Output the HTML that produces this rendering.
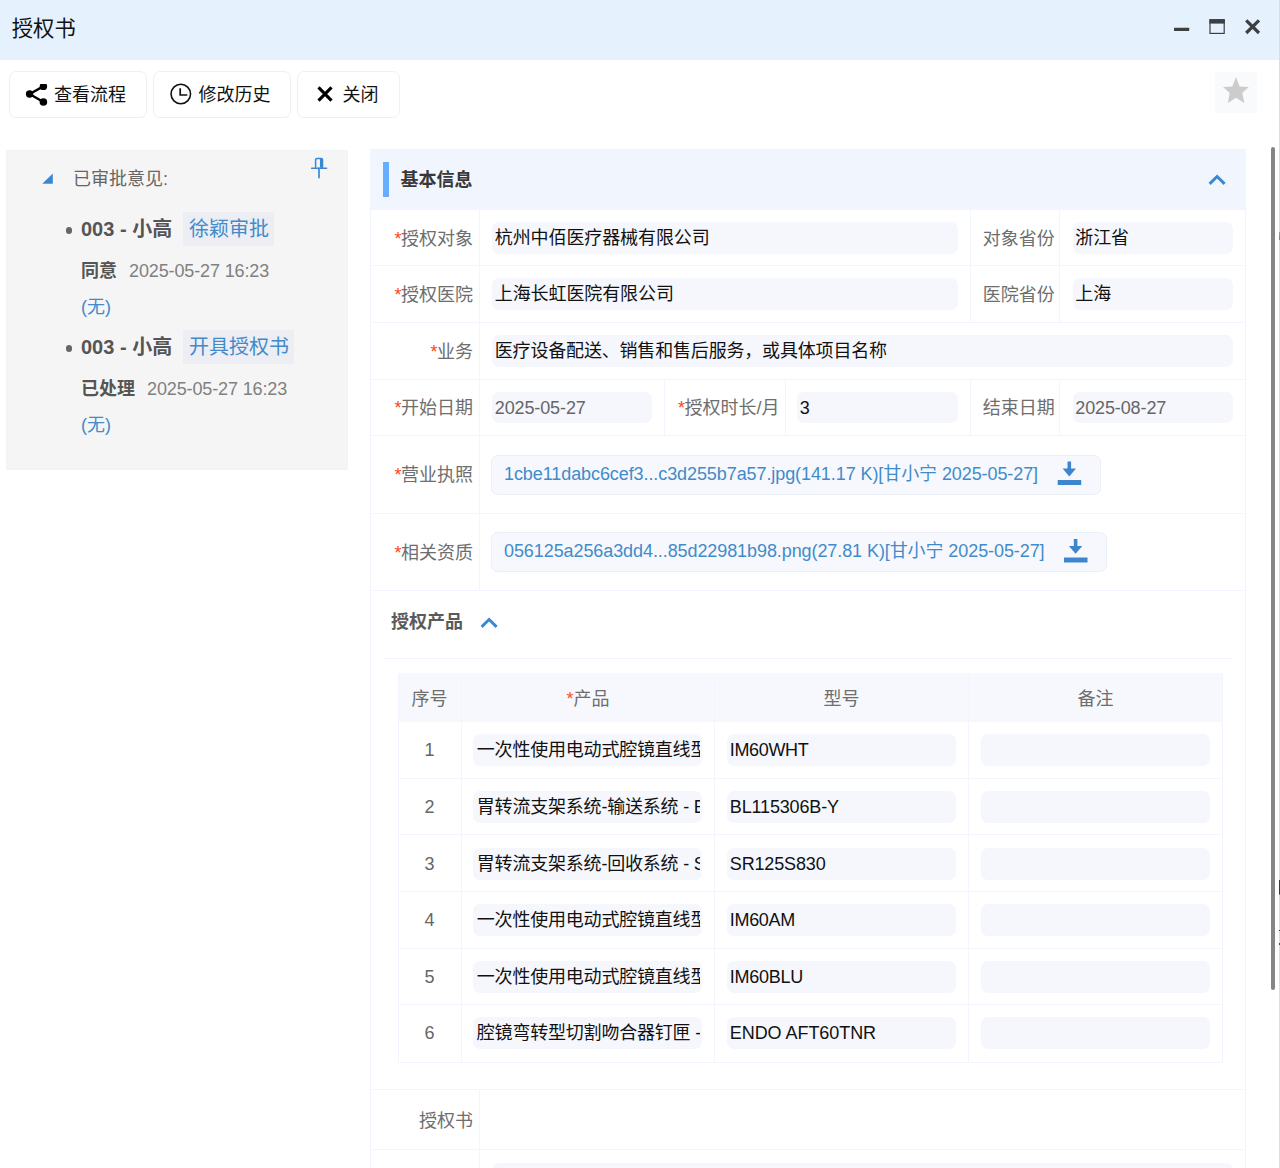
<!DOCTYPE html>
<html lang="zh-CN">
<head>
<meta charset="utf-8">
<title>授权书</title>
<style>
*{box-sizing:border-box;margin:0;padding:0}
html,body{width:1280px;height:1168px;overflow:hidden;background:#fff}
body{position:relative;font-family:"Liberation Sans","Noto Sans CJK SC",sans-serif;font-size:18px;color:#111;line-height:1}
.abs{position:absolute}
svg{display:block}
/* title bar */
#title{left:0;top:0;width:1279px;height:59.5px;background:#e5f2fe}
#title .t{left:11.8px;top:14.3px;font-size:21.3px;line-height:30px;color:#111;white-space:nowrap}
#edge{left:1279px;top:0;width:1px;height:1168px;background:#dcdde0}
/* toolbar */
.btn{top:71px;height:46.5px;border:1px solid #f0f0f0;border-radius:7px;background:#fff;white-space:nowrap}
.btn .lbl{position:absolute;top:8.6px;line-height:28px;font-size:18px;color:#111}
#star{left:1215px;top:71.5px;width:42px;height:41px;background:#f9fafc}
/* left panel */
#left{left:6px;top:149.5px;width:342px;height:320px;background:#f5f5f5;box-shadow:inset 0 0 0 1px #f0f3f8}
#left .h{left:67px;top:15px;line-height:28px;font-size:18px;color:#666;white-space:nowrap}
#left .it{left:75px;line-height:30px;font-size:20px;font-weight:bold;color:#555;white-space:nowrap}
#left .dot{left:59.5px;width:6.5px;height:6.5px;border-radius:50%;background:#666}
#left .tag{left:177.4px;height:34px;background:#eceef4;color:#428bca;font-size:20px;line-height:34px;padding:0 4.8px 0 5.6px;white-space:nowrap}
#left .st{left:75px;line-height:28px;font-size:18px;color:#555;font-weight:bold;white-space:nowrap}
#left .st span{font-weight:normal;color:#808080;margin-left:12px;letter-spacing:-0.13px}
#left .no{left:75px;line-height:28px;font-size:18px;color:#428bca;white-space:nowrap}
/* right panel */
#right{left:370px;top:149.5px;width:875.5px;height:1030px}
#right .hd{left:0;top:-0.6px;width:100%;height:60.4px;background:#f1f5fe}
#right .hd .bar{left:12.5px;top:13.1px;width:6px;height:35px;background:#66adff}
#right .hd .tx{left:30.5px;top:16.6px;line-height:28px;font-size:18px;font-weight:bold;color:#383838;white-space:nowrap}
.row{left:0;width:100%;border-top:1px solid #f2f5fd}
.lab{position:absolute;top:0;height:100%;border-right:1px solid #f2f5fd;color:#6e6e6e;font-size:18px;text-align:right;padding-right:5.5px;padding-top:2px;white-space:nowrap;display:flex;align-items:center;justify-content:flex-end}
.lab i{font-style:normal;color:#ff4410;letter-spacing:-0.5px}
.inp{position:absolute;height:31.5px;border-radius:7px;background:#f5f7fd;font-size:18px;line-height:32.5px;padding-left:2.8px;border-right:2px solid #f5f7fd;color:#111;letter-spacing:-0.1px;white-space:nowrap;overflow:hidden}
.inp.g{color:#666;letter-spacing:-0.12px}

.vb{position:absolute;top:0;height:100%;width:1px;background:#f2f5fd}
.att{position:absolute;height:40px;border:1px solid #ebeff6;border-radius:7px;background:#f6f8fd;color:#428bca;font-size:18px;line-height:37px;padding-left:12.5px;white-space:nowrap;letter-spacing:-0.085px}
/* table */
#tb{left:27px;top:523px;width:826px;height:390px}
#tb .th{position:absolute;top:0;height:49px;background:#f6f8fd;color:#6e6e6e;font-size:18px;line-height:52px;text-align:center}
#tb .th i{font-style:normal;color:#f4511e}
#tb .hl{position:absolute;left:0;width:825px;height:1px;background:#f2f5fd}
#tb .vl{position:absolute;top:0;width:1px;height:390px;background:#f2f5fd}
#tb .n{position:absolute;left:0;width:64px;text-align:center;color:#666;font-size:18px;line-height:32px}
#scroll{left:1271.3px;top:147.3px;width:3.9px;height:842.7px;border-radius:2px;background:#858585}
</style>
</head>
<body>
<div id="title" class="abs"><div class="t abs">授权书</div>
<svg class="abs" style="left:1170px;top:14px" width="100" height="26" viewBox="0 0 100 26">
<rect x="4" y="13.7" width="15.2" height="3.4" rx="0.6" fill="#3c4043"/>
<rect x="40" y="5.8" width="14.2" height="13.6" fill="none" stroke="#3c4043" stroke-width="1.2"/>
<rect x="39.4" y="5.2" width="15.4" height="4.4" fill="#3c4043"/>
<path d="M76.2 6.3 L89 19 M89 6.3 L76.2 19" stroke="#3c4043" stroke-width="3.2" fill="none"/>
</svg>
</div>
<div id="edge" class="abs"></div>
<div class="abs" style="left:1279px;top:232px;width:1px;height:4px;background:#c08a5a"></div>
<div class="abs" style="left:1279px;top:236px;width:1px;height:4px;background:#5a88d0"></div>
<div class="abs" style="left:1279px;top:880px;width:1px;height:14px;background:#35375e"></div>
<div class="abs" style="left:1279px;top:894px;width:1px;height:1px;background:#4a86e0"></div>
<div class="abs" style="left:1279px;top:930px;width:1px;height:1px;background:#333"></div>
<div class="abs" style="left:1279px;top:943px;width:1px;height:2px;background:#444"></div>

<div class="btn abs" style="left:8.6px;width:138.5px">
<svg class="abs" style="left:15px;top:12px" width="24" height="24" viewBox="0 0 24 24">
<path d="M4.6 10 L18.4 2.4 M4.6 10 L18.4 18" stroke="#000" stroke-width="2.4" fill="none"/>
<circle cx="4.6" cy="10" r="3.7" fill="#000"/><circle cx="18.4" cy="2.4" r="3.7" fill="#000"/><circle cx="18.4" cy="18" r="3.8" fill="#000"/>
</svg>
<span class="lbl" style="left:44.5px">查看流程</span></div>
<div class="btn abs" style="left:152.6px;width:138.5px">
<svg class="abs" style="left:16.3px;top:10.8px" width="22" height="22" viewBox="0 0 22 22">
<circle cx="10.8" cy="11" r="9.75" fill="none" stroke="#111" stroke-width="1.6"/>
<path d="M10.2 5.3 V12 H17.3" fill="none" stroke="#111" stroke-width="1.7"/>
</svg>
<span class="lbl" style="left:45px">修改历史</span></div>
<div class="btn abs" style="left:296.6px;width:103.4px">
<svg class="abs" style="left:18.6px;top:13.2px" width="18" height="18" viewBox="0 0 18 18">
<path d="M2.5 2.4 L15.5 15.6 M15.5 2.4 L2.5 15.6" stroke="#000" stroke-width="3.1" fill="none"/>
</svg>
<span class="lbl" style="left:45px">关闭</span></div>
<div id="star" class="abs">
<svg class="abs" style="left:0;top:0" width="42" height="41" viewBox="0 0 42 41">
<path d="M21 5.5 L24.6 15.2 L33.8 15.7 L27.2 21.5 L29.4 31.5 L21 26.3 L12.9 31.5 L14.7 21.5 L8 15.7 L17.3 15.2 Z" fill="#cccccc" transform="translate(0,-0.6)"/>
</svg></div>

<div id="left" class="abs">
<svg class="abs" style="left:36px;top:23px" width="12" height="12" viewBox="0 0 12 12"><path d="M10.8 0.5 V10.8 H0.3 Z" fill="#3a88d2"/></svg>
<div class="h abs">已审批意见:</div>
<svg class="abs" style="left:304px;top:7px" width="18" height="22" viewBox="0 0 18 22">
<path d="M5.6 10.8 V2.7 Q5.6 1.4 6.9 1.4 H11.2 Q12.5 1.4 12.5 2.7 V10.8" fill="none" stroke="#3a88d2" stroke-width="1.5"/>
<path d="M11.3 1.6 V10.8" stroke="#3a88d2" stroke-width="2.7"/>
<path d="M1.6 11.3 H16.6" stroke="#3a88d2" stroke-width="1.5" stroke-linecap="round"/>
<path d="M9 11.3 V20.6" stroke="#3a88d2" stroke-width="1.7" stroke-linecap="round"/>
</svg>
<div class="dot abs" style="top:77.5px"></div>
<div class="it abs" style="top:64px">003 - 小高</div>
<div class="tag abs" style="top:62.5px">徐颖审批</div>
<div class="st abs" style="top:107px">同意<span>2025-05-27 16:23</span></div>
<div class="no abs" style="top:143px">(无)</div>
<div class="dot abs" style="top:195.5px"></div>
<div class="it abs" style="top:182px">003 - 小高</div>
<div class="tag abs" style="top:180.5px">开具授权书</div>
<div class="st abs" style="top:225px">已处理<span>2025-05-27 16:23</span></div>
<div class="no abs" style="top:261px">(无)</div>
</div>

<div id="right" class="abs">
<div class="hd abs"><div class="bar abs"></div><div class="tx abs">基本信息</div>
<svg class="abs" style="left:836px;top:22.8px" width="22" height="16" viewBox="0 0 22 16"><path d="M3.6 11.9 L11.1 4.5 L18.6 11.9" fill="none" stroke="#3a88d2" stroke-width="2.9"/></svg>
</div>
<div class="vb" style="left:0"></div><div class="vb" style="left:874.5px"></div>
<!-- rows -->
<div class="row abs" style="top:59.5px;height:56px">
 <div class="lab" style="left:0;width:109.5px"><i>*</i>授权对象</div>
 <div class="inp" style="left:122px;top:12px;width:466px">杭州中佰医疗器械有限公司</div>
 <div class="vb" style="left:599.5px"></div>
 <div class="lab" style="left:600.5px;width:89px;padding-right:3.8px">对象省份</div>
 <div class="inp" style="left:702.5px;top:12px;width:160.5px">浙江省</div>
</div>
<div class="row abs" style="top:115.5px;height:57px">
 <div class="lab" style="left:0;width:109.5px"><i>*</i>授权医院</div>
 <div class="inp" style="left:122px;top:12px;width:466px">上海长虹医院有限公司</div>
 <div class="vb" style="left:599.5px"></div>
 <div class="lab" style="left:600.5px;width:89px;padding-right:3.8px">医院省份</div>
 <div class="inp" style="left:702.5px;top:12px;width:160.5px">上海</div>
</div>
<div class="row abs" style="top:172.5px;height:56.5px">
 <div class="lab" style="left:0;width:109.5px"><i>*</i>业务</div>
 <div class="inp" style="left:122px;top:12px;width:741px;letter-spacing:-0.18px">医疗设备配送、销售和售后服务，或具体项目名称</div>
</div>
<div class="row abs" style="top:229px;height:56.5px">
 <div class="lab" style="left:0;width:109.5px"><i>*</i>开始日期</div>
 <div class="inp g" style="left:122px;top:12px;width:160px">2025-05-27</div>
 <div class="vb" style="left:293.5px"></div>
 <div class="lab" style="left:294.5px;width:121px;padding-right:5px"><i>*</i>授权时长/月</div>
 <div class="inp" style="left:427px;top:12px;width:160.5px">3</div>
 <div class="vb" style="left:599.5px"></div>
 <div class="lab" style="left:600.5px;width:89px;padding-right:3.8px">结束日期</div>
 <div class="inp g" style="left:702.5px;top:12px;width:160.5px">2025-08-27</div>
</div>
<div class="row abs" style="top:285.5px;height:77.5px">
 <div class="lab" style="left:0;width:109.5px"><i>*</i>营业执照</div>
 <div class="att" style="left:120.5px;top:18.5px;width:610px">1cbe11dabc6cef3...c3d255b7a57.jpg(141.17 K)[甘小宁 2025-05-27]
 <svg class="abs" style="left:564px;top:3px" width="28" height="28" viewBox="0 0 28 28"><path transform="translate(-0.6,-0.4)" d="M2.3 21.5 H25.8 V26.5 H2.3 Z M12.1 3 H15.7 V10 H20.6 L13.9 17.8 L7.2 10 H12.1 Z" fill="#3c86cd"/></svg></div>
</div>
<div class="row abs" style="top:363px;height:77.5px">
 <div class="lab" style="left:0;width:109.5px"><i>*</i>相关资质</div>
 <div class="att" style="left:120.5px;top:18.5px;width:616px">056125a256a3dd4...85d22981b98.png(27.81 K)[甘小宁 2025-05-27]
 <svg class="abs" style="left:570px;top:3px" width="28" height="28" viewBox="0 0 28 28"><path transform="translate(-0.3,0)" d="M2.3 21.5 H25.8 V26.5 H2.3 Z M12.1 3 H15.7 V10 H20.6 L13.9 17.8 L7.2 10 H12.1 Z" fill="#3d85cc"/></svg></div>
</div>
<div class="row abs" style="top:440.5px;height:498.5px">
 <div class="abs" style="left:21px;top:17px;line-height:28px;font-size:18px;font-weight:bold;color:#5a5a5a;white-space:nowrap">授权产品</div>
 <svg class="abs" style="left:108px;top:23.5px" width="22" height="16" viewBox="0 0 22 16"><path d="M3.6 11.9 L11.1 4.5 L18.6 11.9" fill="none" stroke="#3a88d2" stroke-width="2.9"/></svg>
 <div class="abs" style="left:12.5px;top:67px;width:850px;height:1px;background:#f2f5fd"></div>
 <div id="tb" class="abs" style="left:27.5px;top:82px">
<div class="th" style="left:0;width:64px">序号</div>
<div class="th" style="left:64px;width:253px"><i>*</i>产品</div>
<div class="th" style="left:317px;width:254px">型号</div>
<div class="th" style="left:571px;width:254px">备注</div>
<div class="hl" style="top:105px"></div>
<div class="n" style="top:61px">1</div>
<div class="inp" style="left:75.5px;top:61px;width:229px;padding-left:3.8px;letter-spacing:-0.2px">一次性使用电动式腔镜直线型切割吻合器</div>
<div class="inp" style="left:329.5px;top:61px;width:229px;letter-spacing:-0.34px">IM60WHT</div>
<div class="inp" style="left:583.5px;top:61px;width:229px"></div>
<div class="hl" style="top:161px"></div>
<div class="n" style="top:118px">2</div>
<div class="inp" style="left:75.5px;top:118px;width:229px;padding-left:3.8px;letter-spacing:-0.2px">胃转流支架系统-输送系统 - BL115306B-Y</div>
<div class="inp" style="left:329.5px;top:118px;width:229px;letter-spacing:-0.15px">BL115306B-Y</div>
<div class="inp" style="left:583.5px;top:118px;width:229px"></div>
<div class="hl" style="top:218px"></div>
<div class="n" style="top:175px">3</div>
<div class="inp" style="left:75.5px;top:175px;width:229px;padding-left:3.8px;letter-spacing:-0.2px">胃转流支架系统-回收系统 - SR125S830</div>
<div class="inp" style="left:329.5px;top:175px;width:229px;letter-spacing:-0.15px">SR125S830</div>
<div class="inp" style="left:583.5px;top:175px;width:229px"></div>
<div class="hl" style="top:275px"></div>
<div class="n" style="top:231px">4</div>
<div class="inp" style="left:75.5px;top:231px;width:229px;padding-left:3.8px;letter-spacing:-0.2px">一次性使用电动式腔镜直线型切割吻合器</div>
<div class="inp" style="left:329.5px;top:231px;width:229px;letter-spacing:-0.33px">IM60AM</div>
<div class="inp" style="left:583.5px;top:231px;width:229px"></div>
<div class="hl" style="top:331px"></div>
<div class="n" style="top:288px">5</div>
<div class="inp" style="left:75.5px;top:288px;width:229px;padding-left:3.8px;letter-spacing:-0.2px">一次性使用电动式腔镜直线型切割吻合器</div>
<div class="inp" style="left:329.5px;top:288px;width:229px;letter-spacing:-0.26px">IM60BLU</div>
<div class="inp" style="left:583.5px;top:288px;width:229px"></div>
<div class="hl" style="top:389px"></div>
<div class="n" style="top:344px">6</div>
<div class="inp" style="left:75.5px;top:344px;width:229px;padding-left:3.8px;letter-spacing:-0.2px">腔镜弯转型切割吻合器钉匣 - ENDO AFT60TNR</div>
<div class="inp" style="left:329.5px;top:344px;width:229px;letter-spacing:-0.06px">ENDO AFT60TNR</div>
<div class="inp" style="left:583.5px;top:344px;width:229px"></div>
<div class="vl" style="left:0px"></div>
<div class="vl" style="left:63.5px"></div>
<div class="vl" style="left:316.5px"></div>
<div class="vl" style="left:570.5px"></div>
<div class="vl" style="left:824px"></div>
 </div>
</div>
<div class="row abs" style="top:939px;height:60.5px">
 <div class="lab" style="left:0;width:109.5px;padding-top:4px">授权书</div>
</div>
<div class="row abs" style="top:999.5px;height:60px">
 <div class="lab" style="left:0;width:109.5px"></div>
 <div class="inp" style="left:122px;top:12.5px;width:741px"></div>
</div>
</div>
<div id="scroll" class="abs"></div>
</body>
</html>
